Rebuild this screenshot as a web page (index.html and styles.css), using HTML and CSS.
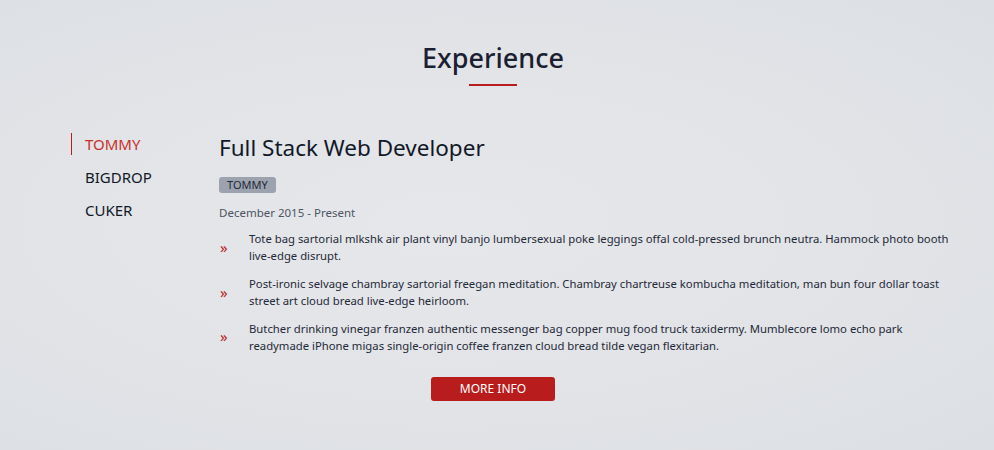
FILE: index.html
```html
<!DOCTYPE html>
<html lang="en">
<head>
<meta charset="utf-8">
<title>Experience</title>
<link rel="stylesheet" href="styles.css">
</head>
<body>
<section class="experience">
  <header class="section-head">
    <h2 class="section-title">Experience</h2>
    <span class="section-rule"></span>
  </header>
  <div class="exp-grid">
    <nav class="tabs">
      <a class="tab active">TOMMY</a>
      <a class="tab">BIGDROP</a>
      <a class="tab">CUKER</a>
    </nav>
    <article class="job">
      <h3 class="job-title">Full Stack Web Developer</h3>
      <span class="badge">TOMMY</span>
      <p class="dates">December 2015 - Present</p>
      <ul class="points">
        <li><span class="chev">&raquo;</span><span>Tote bag sartorial mlkshk air plant vinyl banjo lumbersexual poke leggings offal cold-pressed brunch neutra. Hammock photo booth live-edge disrupt.</span></li>
        <li><span class="chev">&raquo;</span><span>Post-ironic selvage chambray sartorial freegan meditation. Chambray chartreuse kombucha meditation, man bun four dollar toast street art cloud bread live-edge heirloom.</span></li>
        <li><span class="chev">&raquo;</span><span>Butcher drinking vinegar franzen authentic messenger bag copper mug food truck taxidermy. Mumblecore lomo echo park readymade iPhone migas single-origin coffee franzen cloud bread tilde vegan flexitarian.</span></li>
      </ul>
    </article>
  </div>
  <div class="actions">
    <a class="btn">MORE INFO</a>
  </div>
</section>
</body>
</html>
```
FILE: styles.css
```css
* { box-sizing: border-box; }
html, body { margin: 0; height: 100%; }
body {
  font-family: "Noto Sans", "Open Sans", sans-serif;
  background: radial-gradient(ellipse at 45% 50%, #e6e7eb 0%, #e1e3e7 60%, #dcdfe3 100%);
  color: #1f2937;
}
.experience {
  padding: 40px 8px 0 0;
}
.section-head {
  display: flex;
  flex-direction: column;
  align-items: center;
}
.section-title {
  margin: 0;
  font-size: 27px;
  font-weight: 500;
  line-height: 36px;
  color: #1a2030;
}
.section-rule {
  display: block;
  width: 48px;
  height: 2px;
  background: #b91c1c;
  margin-top: 8px;
}
.exp-grid {
  display: grid;
  grid-template-columns: 148px 1fr;
  padding: 47px 31px 0 71px;
}
.tabs {
  display: flex;
  flex-direction: column;
}
.tab {
  display: block;
  font-size: 15px;
  line-height: 22px;
  padding-left: 13px;
  margin-bottom: 11px;
  color: #111827;
  border-left: 1px solid transparent;
}
.tab.active {
  color: #c8312b;
  border-left-color: #b91c1c;
}
.job-title {
  margin: 0;
  padding-top: 1px;
  font-size: 22.5px;
  font-weight: 400;
  line-height: 28px;
  color: #111827;
}
.badge {
  display: inline-block;
  margin-top: 15px;
  background: #9ca3af;
  border-radius: 3px;
  font-size: 11px;
  line-height: 16px;
  padding: 0 8px;
  color: #1f2937;
}
.dates {
  margin: 11px 0 0;
  font-size: 11.5px;
  line-height: 16px;
  color: #4b5563;
}
.points {
  list-style: none;
  margin: 9px 0 0;
  padding: 0;
}
.points li {
  display: flex;
  align-items: center;
  font-size: 11.3px;
  line-height: 17.2px;
  margin-bottom: 10.5px;
}
.chev {
  flex: 0 0 30px;
  color: #b91c1c;
  font-size: 15px;
  padding-left: 1px;
}
.actions {
  display: flex;
  justify-content: center;
  padding-top: 12px;
}
.btn {
  display: inline-block;
  width: 124px;
  height: 24px;
  line-height: 24px;
  text-align: center;
  background: #b91c1c;
  color: #fff;
  font-size: 12px;
  border-radius: 3px;
}
```
